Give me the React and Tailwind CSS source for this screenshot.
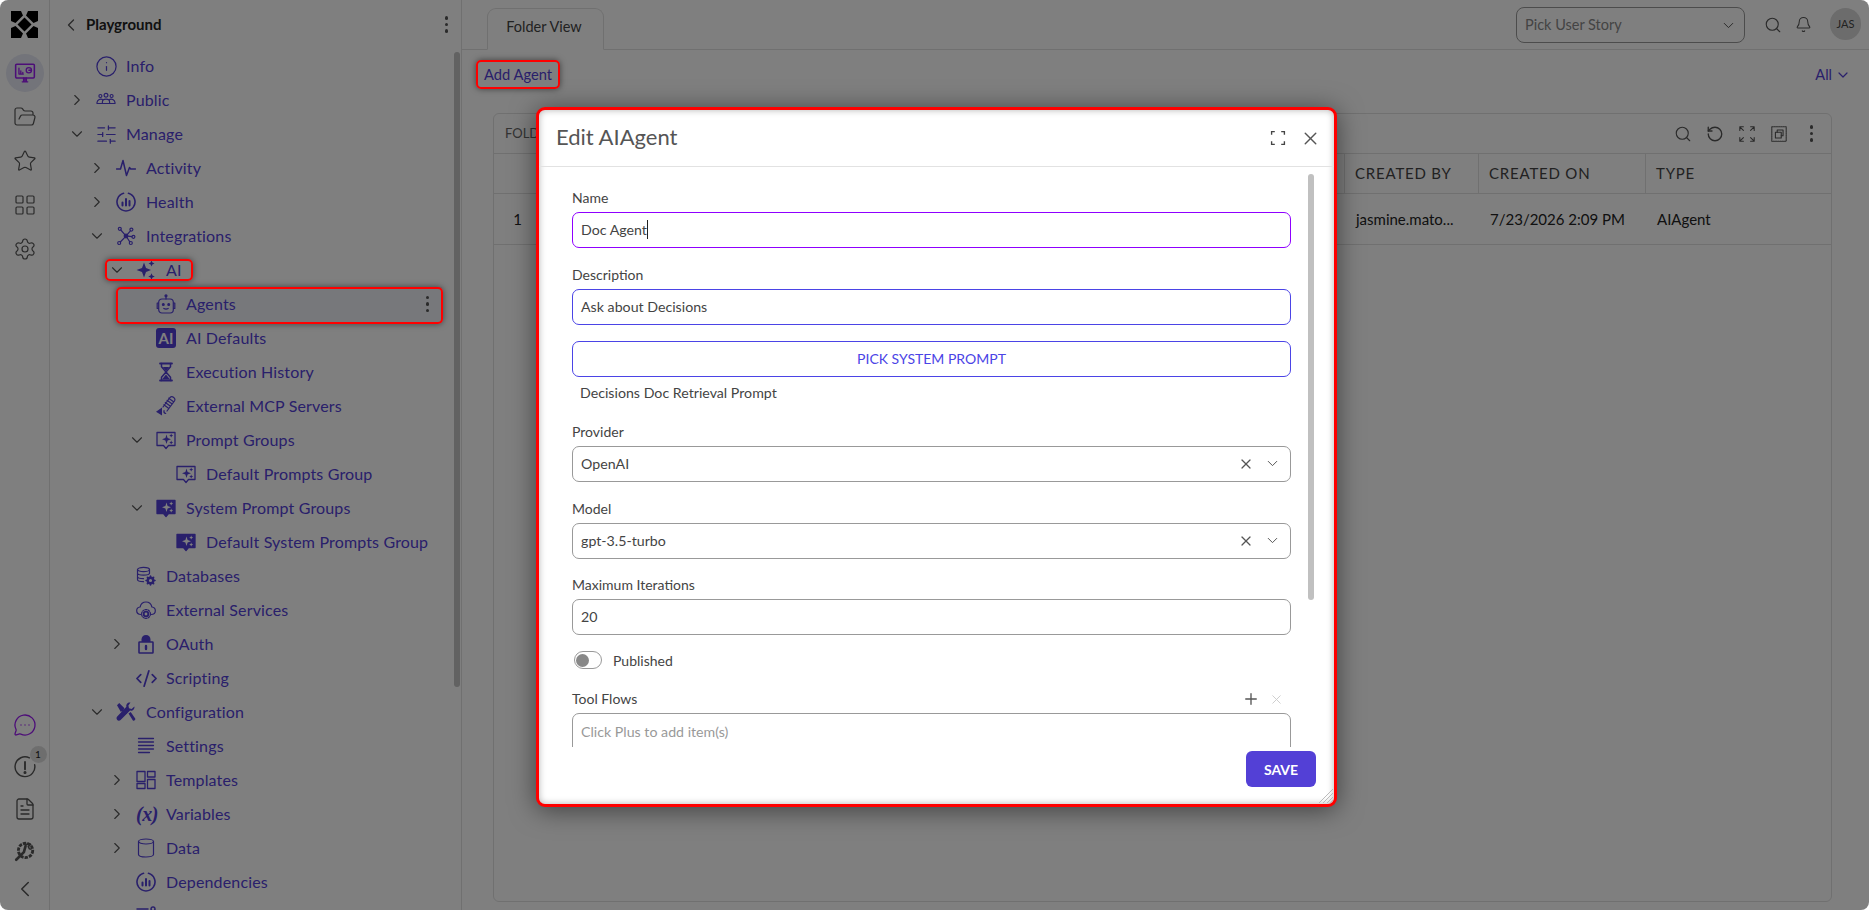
import React from "react";
import {
  ChevronDown, ChevronLeft, ChevronRight, CodeXml, FileText, FolderOpen, Info, LayoutGrid,
  MessageCircleMore, Plus, RotateCcw, Search, Settings, SlidersHorizontal, Star, X, Bell,
} from "lucide-react";

const Svg = ({ children, size = 20, cls = "" }) => (
  <svg width={size} height={size} viewBox="0 0 20 20" fill="none" stroke="currentColor" strokeWidth="1.2" strokeLinecap="round" strokeLinejoin="round" className={cls}>
    {children}
  </svg>
);

const Logo = () => (
  <svg width="27" height="27" viewBox="0 0 27 27" fill="#000">
    <polygon points="13.5,6.5 20.5,13.5 13.5,20.5 6.5,13.5" />
    <polygon points="0,0 10,0 12,4.5 4.5,12 0,10" />
    <polygon points="27,0 17,0 15,4.5 22.5,12 27,10" />
    <polygon points="0,27 10,27 12,22.5 4.5,15 0,17" />
    <polygon points="27,27 17,27 15,22.5 22.5,15 27,17" />
  </svg>
);

const MonitorIcon = () => (
  <Svg size={22}>
    <rect x="1.5" y="2" width="17" height="12.5" rx="1" strokeWidth="1.4" />
    <path d="M4.5 5.5v5.5h4M6.2 11V8M8 11V9.5" />
    <circle cx="13.5" cy="7.5" r="2.4" />
    <path d="M13.5 7.5h2.4M7.5 18h5M10 14.5V18M8.7 14.5v3.5M11.3 14.5v3.5" />
  </Svg>
);

const PeopleIcon = () => (
  <Svg>
    <circle cx="10" cy="5.2" r="1.9" />
    <circle cx="4.4" cy="6" r="1.5" />
    <circle cx="15.6" cy="6" r="1.5" />
    <path d="M6.4 13.5v-1.6c0-1.6 1.4-2.7 3.6-2.7s3.6 1.1 3.6 2.7v1.6zM6.2 9.4c-2.6-.6-4.8.4-5.2 3.1v1h5.2M13.8 9.4c2.6-.6 4.8.4 5.2 3.1v1h-5.2" />
  </Svg>
);

const ActivityIcon = () => (
  <Svg>
    <path d="M0.5 11H4.500L7 2.500l3.500 15 3-8 1.200 1.500h4.800" strokeWidth="1.500" />
  </Svg>
);

const HealthIcon = () => (
  <Svg>
    <path d="M12.5 1.3A9 9 0 1 1 7.5 1.3" strokeWidth="1.6" />
    <path d="M6.5 10.5v3M10 7v6.5M13.5 9v4.5" strokeWidth="2" />
  </Svg>
);

const NetworkIcon = () => (
  <Svg>
    <circle cx="10" cy="10" r="1.8" fill="currentColor" />
    <circle cx="3.8" cy="2.8" r="1.5" />
    <circle cx="15.4" cy="3.6" r="1.5" />
    <circle cx="17.4" cy="10.8" r="1.5" />
    <circle cx="14.8" cy="17" r="1.5" />
    <circle cx="3.2" cy="17" r="1.5" />
    <path d="M4.8 4 8.8 8.6M14.4 4.8 11.2 8.6M15.9 10.6 11.8 10.2M13.8 15.8 11 11.5M4.3 16 8.8 11.4" />
  </Svg>
);

const SparkIcon = () => (
  <Svg>
    <g fill="currentColor" stroke="none">
      <path d="M8 2.5 10 8l5 2-5 2-2 5.5L6 12l-5.5-2L6 8z" />
      <path d="M15.5 0.5 16.4 2.6 18.5 3.5 16.4 4.4 15.5 6.5 14.6 4.4 12.5 3.5 14.6 2.6z" />
      <path d="M15.5 13.2 16.5 15.5 18.8 16.5 16.5 17.5 15.5 19.8 14.5 17.5 12.2 16.5 14.5 15.5z" />
    </g>
  </Svg>
);

const BotIcon = () => (
  <Svg>
    <circle cx="10" cy="1.800" r="1" fill="currentColor" />
    <path d="M10 2.500v2.500M2.500 9H1.200v5.500h1.300M17.500 9h1.300v5.500h-1.300" />
    <rect x="2.700" y="5" width="14.600" height="14" rx="3.200" />
    <circle cx="7.300" cy="10.500" r="0.900" fill="currentColor" />
    <circle cx="12.700" cy="10.500" r="0.900" fill="currentColor" />
    <path d="M7.800 14.500c1.400.7 3 .7 4.400 0" />
  </Svg>
);

const AiBadge = () => (
  <div className="w-5 h-5 rounded-[3px] bg-[#5340d6] text-white text-[15px] leading-5 font-bold text-center">AI</div>
);

const HourglassIcon = () => (
  <Svg>
    <path d="M4 1.5h12M4 18.5h12" strokeWidth="1.8" />
    <path d="M5.5 1.5v3.2L10 10l-4.5 5.3v3.2M14.5 1.5v3.2L10 10l4.5 5.3v3.2" strokeWidth="1.5" />
    <path d="M6.8 5h6.4L10 9zM6 17.5 10 12.5l4 5z" fill="currentColor" stroke="none" />
  </Svg>
);

const McpIcon = () => (
  <Svg>
    <path d="M7 11 14 1.500c1-1 2.500-1 3.700 0 1.200 1 1.500 2.300.8 3.300L11 15M9.300 6.500l4.500 3.300M11 4.300l4.500 3.300M12.700 2.200l4.500 3.300M7.800 8.800l4.400 3.200" />
    <path d="M6 11.500V19.500L0 15.800z" fill="currentColor" stroke="none" />
    <path d="M8 14.500c-.3 1.500.4 2.700 1.700 3" />
  </Svg>
);

const PromptIcon = ({ filled }) => (
  <Svg>
    <path
      d="M1 2.500h18v13h-6.500L10 18.500l-2.500-3H1z"
      fill={filled ? "currentColor" : "none"}
      strokeWidth="1.3"
    />
    <g fill={filled ? "#fff" : "currentColor"} stroke="none">
      <path d="M10.500 4.500 11.600 8l3.400 1.200-3.400 1.200-1.100 3.500-1.100-3.500L6 9.200 9.400 8z" />
      <path d="M15.200 3.600 15.800 5l1.400.6-1.400.6-.6 1.400-.6-1.400-1.400-.6 1.400-.6z" />
      <path d="M15.200 10.600 15.800 12l1.400.6-1.400.6-.6 1.400-.6-1.400-1.400-.6 1.400-.6z" />
    </g>
  </Svg>
);

const DbGearIcon = () => (
  <Svg>
    <ellipse cx="7.500" cy="3.500" rx="6" ry="2.200" />
    <path d="M1.500 3.500v10c0 1.200 2.500 2.200 6 2.200M13.500 3.500v4M1.500 7c0 1.200 2.500 2.200 6 2.200s6-1 6-2.200M1.500 10.500c0 1.200 2.500 2.200 6 2.200" />
    <circle cx="14.500" cy="14.500" r="2.800" strokeWidth="2.400" />
    <path d="M14.500 10v1.200M14.500 17.800V19M10 14.500h1.200M17.800 14.500H19M11.400 11.400l.8.8M16.800 16.800l.8.8M11.400 17.600l.8-.8M16.800 12.200l.8-.8" strokeWidth="1.600" />
  </Svg>
);

const CloudCogIcon = () => (
  <Svg>
    <path d="M5 14.500c-2.500 0-4.300-1.600-4.300-3.800 0-2 1.500-3.500 3.400-3.700C4.800 4 7.200 2 10 2s5.200 2 5.900 5c1.900.2 3.400 1.700 3.400 3.700 0 2.200-1.800 3.800-4.300 3.800" />
    <circle cx="10" cy="14" r="2.300" strokeWidth="1.800" />
    <circle cx="10" cy="14" r="4.400" strokeDasharray="1.600 1.200" />
  </Svg>
);

const LockIcon = () => (
  <Svg>
    <path d="M5.500 8V5.500C5.500 3 7.300 1 10 1s4.500 2 4.500 4.500V8z" fill="currentColor" stroke="none" />
    <rect x="3" y="8" width="14" height="11" rx="0.6" strokeWidth="1.600" />
    <path d="M10 12v3" strokeWidth="2.400" />
  </Svg>
);

const ToolsIcon = () => (
  <svg width="20" height="20" viewBox="0 0 20 20" fill="currentColor">
    <path d="M1 3.200 3.200 1l5.300 5.300-.9 1.200 3.500 3.500-1.500 1.500-3.500-3.500-1.200.9z" />
    <path d="M14.500.6c-2.500-.6-4.800 1.700-4.100 4.200L1.200 14.600c-.9.900-.9 2.400 0 3.400s2.500.9 3.400 0l9.500-9.400c2.500.6 4.900-1.700 4.300-4.200l-2.800 2.500-2.600-.7-.6-2.600z" />
    <path d="m12.500 11.500 2.200-1.500 4.500 6.400c.8 1.100-1.300 2.900-2.300 2z" />
  </svg>
);

const LinesIcon = () => (
  <Svg>
    <path d="M2.500 2.500h15M2.500 6h15M2.500 9.500h15M2.500 13h15M2.500 16.500h11" strokeWidth="1.300" />
  </Svg>
);

const TemplatesIcon = () => (
  <Svg>
    <rect x="1" y="1.500" width="8" height="10" strokeWidth="1.300" />
    <rect x="11.500" y="1.500" width="7.500" height="5.500" strokeWidth="1.300" />
    <rect x="1" y="13.500" width="8" height="5" strokeWidth="1.300" />
    <rect x="11.500" y="9.500" width="7.500" height="9" strokeWidth="1.300" />
  </Svg>
);

const VarIcon = () => (
  <span className="block w-5 h-5 text-[20px] leading-5 font-bold italic text-center tracking-[-0.5px] whitespace-nowrap [font-family:'Liberation_Serif',serif]">(x)</span>
);

const CylinderIcon = () => (
  <Svg>
    <ellipse cx="10" cy="3.500" rx="7.500" ry="2.500" />
    <path d="M2.500 3.500v13c0 1.400 3.400 2.500 7.500 2.500s7.500-1.100 7.500-2.500v-13" />
  </Svg>
);

const CutOffIcon = () => (
  <Svg>
    <path d="M1 3h11M15 3a2 2 0 1 0 0-.1" strokeWidth="1.500" />
  </Svg>
);

const AlertIcon = () => (
  <Svg size={22}>
    <path d="M14 1.700A9 9 0 1 0 18.800 8" strokeWidth="1.300" />
    <path d="M10 5.500v6.500" strokeWidth="1.700" />
    <circle cx="10" cy="15" r="0.800" fill="currentColor" />
  </Svg>
);

const GearWrenchIcon = () => (
  <svg width="22" height="22" viewBox="0 0 20 20" fill="none" stroke="currentColor">
    <circle cx="10.500" cy="9.500" r="6.500" strokeWidth="2.600" strokeDasharray="3 1" />
    <path d="M2 18 9 11l1.500-5.500" strokeWidth="2.400" strokeLinecap="round" />
    <path d="M10 5c1.500-2 4-2 5-1l-2 2 1 2 2 .5" strokeWidth="1.400" />
  </svg>
);

const DashCopyIcon = () => (
  <Svg size={18}>
    <rect x="2" y="2" width="16" height="16" strokeDasharray="1.500 1" />
    <rect x="6" y="8" width="6.500" height="6.500" />
    <path d="M8 8V5.500h6.500V12h-2" />
  </Svg>
);

const ExpandArrows = () => (
  <Svg size={18}>
    <path d="M2 6V2h4M2 2l4 4M18 6V2h-4M18 2l-4 4M2 14v4h4M2 18l4-4M18 14v4h-4M18 18l-4-4" />
  </Svg>
);

const Corners = () => (
  <Svg size={16}>
    <path d="M2 6V2h4M14 2h4v4M18 14v4h-4M6 18H2v-4" strokeWidth="1.700" strokeLinecap="butt" strokeLinejoin="miter" />
  </Svg>
);

const Dots = ({ cls = "" }) => (
  <div className={`flex flex-col items-center gap-[3px] ${cls}`}>
    <div className="w-[3.500px] h-[3.500px] rounded-full bg-current"></div>
    <div className="w-[3.500px] h-[3.500px] rounded-full bg-current"></div>
    <div className="w-[3.500px] h-[3.500px] rounded-full bg-current"></div>
  </div>
);

const indent = ["pl-[17px]", "pl-[37px]", "pl-[57px]", "pl-[77px]", "pl-[97px]"];

const lucide = { size: 23, strokeWidth: 1.3, className: "-m-[1.5px]" };
const railIcon = { size: 24, strokeWidth: 1.2 };

const tree = [
  { level: 0, icon: <Info {...lucide} />, label: "Info" },
  { level: 0, arrow: "r", icon: <PeopleIcon />, label: "Public" },
  { level: 0, arrow: "d", icon: <SlidersHorizontal {...lucide} />, label: "Manage" },
  { level: 1, arrow: "r", icon: <ActivityIcon />, label: "Activity" },
  { level: 1, arrow: "r", icon: <HealthIcon />, label: "Health" },
  { level: 1, arrow: "d", icon: <NetworkIcon />, label: "Integrations" },
  { level: 2, arrow: "d", icon: <SparkIcon />, label: "AI", mark: "ai" },
  { level: 3, icon: <BotIcon />, label: "Agents", mark: "agents" },
  { level: 3, icon: <AiBadge />, label: "AI Defaults" },
  { level: 3, icon: <HourglassIcon />, label: "Execution History" },
  { level: 3, icon: <McpIcon />, label: "External MCP Servers" },
  { level: 3, arrow: "d", icon: <PromptIcon />, label: "Prompt Groups" },
  { level: 4, icon: <PromptIcon />, label: "Default Prompts Group" },
  { level: 3, arrow: "d", icon: <PromptIcon filled />, label: "System Prompt Groups" },
  { level: 4, icon: <PromptIcon filled />, label: "Default System Prompts Group" },
  { level: 2, icon: <DbGearIcon />, label: "Databases" },
  { level: 2, icon: <CloudCogIcon />, label: "External Services" },
  { level: 2, arrow: "r", icon: <LockIcon />, label: "OAuth" },
  { level: 2, icon: <CodeXml size={23} strokeWidth={1.8} className="-m-[1.5px]" />, label: "Scripting" },
  { level: 1, arrow: "d", icon: <ToolsIcon />, label: "Configuration" },
  { level: 2, icon: <LinesIcon />, label: "Settings" },
  { level: 2, arrow: "r", icon: <TemplatesIcon />, label: "Templates" },
  { level: 2, arrow: "r", icon: <VarIcon />, label: "Variables" },
  { level: 2, arrow: "r", icon: <CylinderIcon />, label: "Data" },
  { level: 2, icon: <HealthIcon />, label: "Dependencies" },
  { level: 2, icon: <CutOffIcon />, label: "" },
];

const TreeRow = ({ row }) => (
  <div className={`relative h-[34px] shrink-0 flex items-center text-[16px] tracking-[0.15px] text-[#5340d6] ${indent[row.level]}`}>
    {row.mark === "agents" && (
      <div className="absolute left-[68px] right-[19px] top-0 bottom-[-2px] bg-[#eef0f6]"></div>
    )}
    {row.mark === "agents" && (
      <div className="absolute z-20 left-[66px] right-[18px] top-0 bottom-[-3px] rounded-[5px] border-2 border-[#f00] shadow-[0_0_6px_rgba(0,0,0,.5)]"></div>
    )}
    {row.mark === "ai" && (
      <div className="absolute z-20 left-[55px] w-[88px] top-[6px] h-[22px] rounded-[5px] border-2 border-[#f00] shadow-[0_0_6px_rgba(0,0,0,.5)]"></div>
    )}
    <div className="relative w-5 mr-[9px] flex justify-center text-[#555]">
      {row.arrow === "r" && <ChevronRight size={18} strokeWidth={1.5} />}
      {row.arrow === "d" && <ChevronDown size={18} strokeWidth={1.5} />}
    </div>
    <div className="relative w-5 h-5 shrink-0 mr-[10px]">{row.icon}</div>
    <span className="relative whitespace-nowrap">{row.label}</span>
    {row.mark === "agents" && (
      <Dots cls="absolute right-[32px] text-[#555]" />
    )}
  </div>
);

const Field = ({ label, children, cls = "mb-4" }) => (
  <div className={cls}>
    <div className="h-[25px] pt-px text-[14px] leading-5 text-[#444]">{label}</div>
    {children}
  </div>
);

const TextBox = ({ value, border = "border-[#999]", caret }) => (
  <div className={`h-9 rounded-[7px] border ${border} flex items-center pl-2 pb-px text-[14.2px] text-[#444]`}>
    <span>{value}</span>
    {caret && <span className="w-px h-[19px] bg-[#222]"></span>}
  </div>
);

const SelectBox = ({ value }) => (
  <div className="h-9 rounded-[7px] border border-[#999] flex items-center pl-2 pr-[9px] pb-px text-[14.2px] text-[#444]">
    <span className="flex-1">{value}</span>
    <X size={16} strokeWidth={1.8} className="mr-[10px] text-[#555]" />
    <ChevronDown size={17} strokeWidth={1.4} className="text-[#555]" />
  </div>
);

export default function App() {
  return (
    <div className="relative w-full h-[910px] overflow-hidden flex bg-white text-[#444] [font-family:Lato,'Noto_Sans',sans-serif]">
      {/* icon rail */}
      <div className="w-[50px] shrink-0 border-r border-[#e0e0e0] flex flex-col items-center text-[#555]">
        <div className="mt-[11px] mb-[16px]"><Logo /></div>
        <div className="w-[38px] h-[38px] rounded-full bg-[#e6e8f4] flex items-center justify-center text-[#9a1cf0] mb-[22px]"><MonitorIcon /></div>
        <div className="h-11 -mt-[19px] flex items-center"><FolderOpen {...railIcon} /></div>
        <div className="h-11 flex items-center"><Star {...railIcon} /></div>
        <div className="h-11 flex items-center"><LayoutGrid {...railIcon} /></div>
        <div className="h-11 flex items-center"><Settings {...railIcon} /></div>
        <div className="mt-auto h-[42px] flex items-center text-[#9a1cf0]"><MessageCircleMore size={24} strokeWidth={1.3} /></div>
        <div className="relative h-[42px] flex items-center">
          <AlertIcon />
          <div className="absolute -right-[11px] top-[0px] w-[17px] h-[17px] rounded-full bg-[#ddd] text-[10px] leading-[17px] text-center text-[#222]">1</div>
        </div>
        <div className="h-[42px] flex items-center"><FileText size={24} strokeWidth={1.3} /></div>
        <div className="h-[42px] flex items-center"><GearWrenchIcon /></div>
        <div className="h-[34px] mb-[4px] flex items-center"><ChevronLeft size={26} strokeWidth={1.4} /></div>
      </div>

      {/* tree sidebar */}
      <div className="relative w-[412px] shrink-0 border-r border-[#e0e0e0] flex flex-col overflow-hidden">
        <div className="h-[49px] shrink-0 flex items-center pl-[11px] pr-[13px] text-[#222]">
          <ChevronLeft size={20} strokeWidth={1.6} className="text-[#555]" />
          <span className="ml-[5px] text-[15px] font-bold flex-1">Playground</span>
          <Dots cls="text-[#555]" />
        </div>
        {tree.map((row, i) => <TreeRow key={i} row={row} />)}
        <div className="absolute right-[1px] top-[52px] w-[6px] h-[635px] rounded-full bg-[#c4c4c4]"></div>
      </div>

      {/* main */}
      <div className="flex-1 min-w-0 flex flex-col">
        <div className="h-[50px] shrink-0 border-b border-[#e0e0e0] flex items-end pl-[25px] pr-2">
          <div className="w-[117px] h-[42px] -mb-px rounded-t-[9px] border border-[#e0e0e0] border-b-white bg-white flex items-center justify-center pb-[4px] pr-[3px] text-[14.5px]">Folder View</div>
          <div className="ml-auto self-start mt-[7px] w-[229px] h-[36px] rounded-[8px] border border-[#999] flex items-center pl-2 pr-[7px] text-[14.5px] text-[#888]">
            <span className="flex-1">Pick User Story</span>
            <ChevronDown size={17} strokeWidth={1.4} className="text-[#555]" />
          </div>
          <div className="self-start mt-[16px] ml-[19px] text-[#555]"><Search size={18} strokeWidth={1.5} /></div>
          <div className="self-start mt-[16px] ml-[13px] text-[#555]"><Bell size={17} strokeWidth={1.5} /></div>
          <div className="self-start mt-[8px] ml-[18px] w-[31px] h-[32px] rounded-full bg-[#d8d8d8] flex items-center justify-center text-[11px] text-[#444]">JAS</div>
        </div>

        <div className="h-[63px] shrink-0 flex items-start pl-[14px] pr-[18px] pt-[10px]">
          <div className="relative h-[29px] px-2 flex items-center text-[14.7px] text-[#5340d6]">
            Add Agent
            <div className="absolute z-20 inset-0 rounded-[5px] border-2 border-[#f00] shadow-[0_0_6px_rgba(0,0,0,.5)]"></div>
          </div>
          <div className="ml-auto mt-[4px] flex items-center text-[14.5px] text-[#5340d6]">
            All<ChevronDown size={16} strokeWidth={1.8} className="ml-[3px]" />
          </div>
        </div>

        <div className="flex-1 ml-[31px] mr-[37px] mb-[8px] rounded-[6px] border border-[#e0e0e0] text-[14px]">
          <div className="h-[40px] border-b border-[#e0e0e0] flex items-center pl-[11px] pr-[18px] text-[#666]">
            <span className="flex-1 text-[13px]">FOLDER</span>
            <div className="flex items-center gap-[14px] text-[#555]">
              <Search size={18} strokeWidth={1.5} />
              <RotateCcw size={18} strokeWidth={1.8} />
              <ExpandArrows />
              <DashCopyIcon />
              <Dots cls="ml-[8px]" />
            </div>
          </div>
          <div className="grid grid-cols-[50px_1fr_134px_167px_185px] h-[40px] border-b border-[#e0e0e0] text-[15px] tracking-[0.8px] text-[#444]">
            <div></div>
            <div className="border-r border-[#e0e0e0]"></div>
            <div className="border-r border-[#e0e0e0] flex items-center pl-[10px]">CREATED BY</div>
            <div className="border-r border-[#e0e0e0] flex items-center pl-[10px]">CREATED ON</div>
            <div className="flex items-center pl-[10px]">TYPE</div>
          </div>
          <div className="grid grid-cols-[50px_1fr_134px_167px_185px] h-[51px] border-b border-[#e0e0e0] text-[15px] text-[#222]">
            <div className="flex items-center justify-center pr-[3px]">1</div>
            <div></div>
            <div className="flex items-center pl-[11px]">jasmine.mato...</div>
            <div className="flex items-center pl-[11px]">7/23/2026 2:09 PM</div>
            <div className="flex items-center pl-[11px]">AIAgent</div>
          </div>
        </div>
      </div>

      {/* dim layer */}
      <div className="absolute z-10 inset-0 rounded-[8px] bg-black/50"></div>

      {/* dialog */}
      <div className="absolute z-30 left-[536px] top-[107px] w-[801px] h-[700px] rounded-[9px] border-[3px] border-[#f00] bg-white flex flex-col shadow-[0_3px_26px_rgba(0,0,0,.5),inset_0_0_7px_rgba(0,0,0,.3)]">
        <div className="h-[57px] shrink-0 border-b border-[#e2e2e2] flex items-center pl-[17px] pr-[13px]">
          <span className="flex-1 text-[22px] pb-[4px] text-[#555]">Edit AIAgent</span>
          <Corners />
          <X size={21} strokeWidth={1.6} className="ml-[14px] text-[#555]" />
        </div>

        <div className="relative h-[580px] shrink-0 overflow-hidden pt-[20px] pl-[33px] pr-[43px]">
          <Field label="Name"><TextBox value="Doc Agent" border="border-[#8f00ff]" caret /></Field>
          <Field label="Description"><TextBox value="Ask about Decisions" border="border-[#4b44e6]" /></Field>
          <div className="h-9 rounded-[7px] border border-[#4b44e6] flex items-center justify-center pb-px text-[14px] text-[#4b44e6]">PICK SYSTEM PROMPT</div>
          <div className="h-5 mt-[6px] mb-[18px] pl-2 text-[14.2px] leading-5 text-[#444]">Decisions Doc Retrieval Prompt</div>
          <Field label="Provider"><SelectBox value="OpenAI" /></Field>
          <Field label="Model" cls="mb-[15px]"><SelectBox value="gpt-3.5-turbo" /></Field>
          <Field label="Maximum Iterations"><TextBox value="20" /></Field>
          <div className="h-[18px] mt-[3px] mb-[19px] flex items-center text-[14px]">
            <div className="ml-[2px] w-[28px] h-[18px] rounded-full border border-[#999] flex items-center pl-[1px]">
              <div className="w-[13px] h-[13px] rounded-full bg-[#888]"></div>
            </div>
            <span className="ml-[11px] pt-px">Published</span>
          </div>
          <div className="h-[25px] flex items-start justify-between pt-px pr-[7px] text-[14px] leading-5">
            <span>Tool Flows</span>
            <div className="flex items-center gap-[9px] h-5">
              <Plus size={18} strokeWidth={1.8} className="text-[#555]" />
              <X size={15} strokeWidth={1.5} className="text-[#ccc]" />
            </div>
          </div>
          <div className="h-[60px] rounded-[7px] border border-[#999] pl-2 pt-[7px] text-[14.2px] text-[#999]">Click Plus to add item(s)</div>
          <div className="absolute right-[20px] top-[7px] w-[6px] h-[426px] rounded-full bg-[#c0c0c0]"></div>
        </div>

        <div className="flex-1 flex justify-end items-start pt-[4px] pr-[18px]">
          <div className="w-[70px] h-[36px] rounded-[6px] bg-[#5340d6] text-white text-[14px] font-bold flex items-center justify-center">SAVE</div>
        </div>
        <svg width="16" height="16" viewBox="0 0 16 16" stroke="#bbb" className="absolute right-0 bottom-0">
          <path d="M15 1 1 15M15 5 5 15M15 9 9 15M15 12 12 15" />
        </svg>
      </div>
    </div>
  );
}
